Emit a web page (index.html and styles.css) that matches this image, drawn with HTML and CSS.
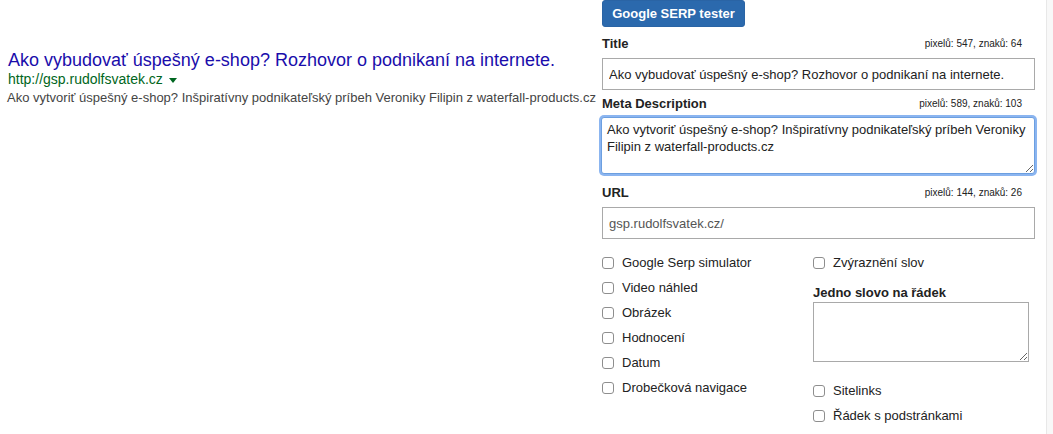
FILE: index.html
```html
<!DOCTYPE html>
<html lang="cs">
<head>
<meta charset="utf-8">
<title>Google SERP tester</title>
<link rel="stylesheet" href="styles.css">
</head>
<body>
<div class="page">
  <div class="preview">
    <a class="serp-title" href="#">Ako vybudovať úspešný e-shop? Rozhovor o podnikaní na internete.</a>
    <div class="serp-url">http://gsp.rudolfsvatek.cz <span class="caret"></span></div>
    <div class="serp-desc">Ako vytvoriť úspešný e-shop? Inšpiratívny podnikateľský príbeh Veroniky Filipin z waterfall-products.cz</div>
  </div>
  <div class="form">
    <button class="btn">Google SERP tester</button>
    <div class="label-row first"><span class="label">Title</span><span class="count">pixelů: 547, znaků: 64</span></div>
    <input class="field" type="text" value="Ako vybudovať úspešný e-shop? Rozhovor o podnikaní na internete.">
    <div class="label-row meta"><span class="label">Meta Description</span><span class="count">pixelů: 589, znaků: 103</span></div>
    <textarea class="area focus">Ako vytvoriť úspešný e-shop? Inšpiratívny podnikateľský príbeh Veroniky Filipin z waterfall-products.cz</textarea>
    <div class="label-row url"><span class="label">URL</span><span class="count">pixelů: 144, znaků: 26</span></div>
    <input class="field gray" type="text" value="gsp.rudolfsvatek.cz/">
    <div class="options">
      <div class="col">
        <label class="check"><input type="checkbox"><span>Google Serp simulator</span></label>
        <label class="check"><input type="checkbox"><span>Video náhled</span></label>
        <label class="check"><input type="checkbox"><span>Obrázek</span></label>
        <label class="check"><input type="checkbox"><span>Hodnocení</span></label>
        <label class="check"><input type="checkbox"><span>Datum</span></label>
        <label class="check"><input type="checkbox"><span>Drobečková navigace</span></label>
      </div>
      <div class="col">
        <label class="check"><input type="checkbox"><span>Zvýraznění slov</span></label>
        <div class="words-label">Jedno slovo na řádek</div>
        <textarea class="words"></textarea>
        <label class="check sitelinks"><input type="checkbox"><span>Sitelinks</span></label>
        <label class="check"><input type="checkbox"><span>Řádek s podstránkami</span></label>
      </div>
    </div>
  </div>
  <div class="spacer"></div>
  <div class="scrollbar"></div>
</div>
</body>
</html>
```
FILE: styles.css
```css
html, body {
  margin: 0;
  padding: 0;
  background: #fff;
  font-family: "Liberation Sans", Arial, sans-serif;
  overflow: hidden;
}
.page {
  display: flex;
  height: 434px;
}
.preview {
  width: 594px;
  padding-left: 8px;
  padding-top: 50px;
  flex: none;
}
.serp-title {
  display: block;
  font-size: 18px;
  line-height: 20px;
  color: #1a0dab;
  text-decoration: none;
  white-space: nowrap;
}
.serp-url {
  font-size: 14px;
  line-height: 18px;
  color: #006621;
}
.caret {
  display: inline-block;
  width: 0;
  height: 0;
  border-left: 4px solid transparent;
  border-right: 4px solid transparent;
  border-top: 5px solid #006621;
  vertical-align: middle;
  margin-left: 2px;
}
.serp-desc {
  font-size: 13px;
  line-height: 19px;
  color: #444;
  margin-left: -1px;
  white-space: nowrap;
}
.form {
  width: 433px;
  flex: none;
  display: flex;
  flex-direction: column;
  align-items: flex-start;
}
.btn {
  height: 27px;
  width: 143px;
  padding: 0;
  background: #2b69ad;
  color: #fff;
  border: 1px solid #2a64a5;
  border-radius: 3px;
  font-family: "Liberation Sans", Arial, sans-serif;
  font-weight: bold;
  font-size: 13px;
  white-space: nowrap;
}
.label-row {
  display: flex;
  justify-content: space-between;
  align-items: center;
  width: 420px;
  height: 16px;
}
.label-row.first { margin-top: 8px; }
.label-row.meta { margin-top: 5px; }
.label-row.url { margin-top: 10px; }
.label {
  font-weight: bold;
  font-size: 13px;
  color: #222;
}
.count {
  font-size: 10px;
  color: #222;
}
.field {
  box-sizing: border-box;
  width: 433px;
  height: 32px;
  margin: 7px 0 0;
  padding: 0 6px;
  border: 1px solid #a9a9a9;
  border-radius: 0;
  font-family: "Liberation Sans", Arial, sans-serif;
  font-size: 13px;
  color: #222;
  outline: none;
}
.field.gray { color: #555; }
.area {
  box-sizing: border-box;
  width: 434px;
  height: 57px;
  margin: 6px 0 0 -1px;
  padding: 3px 5px;
  border: 1px solid #6c9fe0;
  border-radius: 3px;
  box-shadow: 0 0 0 2px #8bb5f0;
  font-family: "Liberation Sans", Arial, sans-serif;
  font-size: 13px;
  line-height: 17px;
  color: #222;
  resize: vertical;
  outline: none;
}
.options {
  display: flex;
  margin-top: 11px;
}
.col {
  display: flex;
  flex-direction: column;
  align-items: flex-start;
}
.col:first-child { width: 211px; }
.check {
  display: flex;
  align-items: center;
  height: 25px;
  font-size: 13px;
  color: #222;
}
.check input {
  -webkit-appearance: none;
  appearance: none;
  box-sizing: border-box;
  width: 12px;
  height: 12px;
  margin: 1px 8px 0 0;
  border: 1px solid #8e8e8e;
  border-radius: 3px;
  background: #fff;
}
.words-label {
  margin-top: 10px;
  height: 16px;
  line-height: 16px;
  font-size: 13px;
  font-weight: bold;
  color: #222;
}
.words {
  box-sizing: border-box;
  width: 216px;
  height: 60px;
  margin: 1px 0 0;
  border: 1px solid #a9a9a9;
  border-radius: 0;
  resize: vertical;
  outline: none;
}
.sitelinks { margin-top: 16px; }
.spacer { flex: 1; }
.scrollbar {
  width: 6px;
  flex: none;
  background: #f8f8f8;
  border-left: 1px solid #e8e8e8;
}
```
